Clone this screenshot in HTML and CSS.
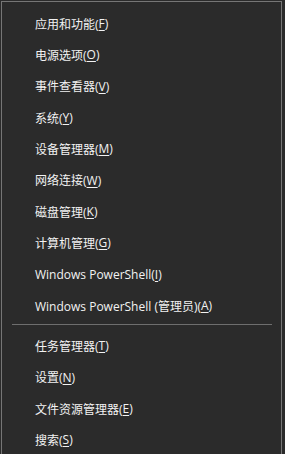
FILE: index.html
```html
<!DOCTYPE html>
<html lang="zh-CN">
<head>
<meta charset="utf-8">
<link rel="stylesheet" href="styles.css">
</head>
<body>
<div class="menu">
  <ul class="group">
    <li class="item">应用和功能(<u>F</u>)</li>
    <li class="item">电源选项(<u>O</u>)</li>
    <li class="item">事件查看器(<u>V</u>)</li>
    <li class="item">系统(<u>Y</u>)</li>
    <li class="item">设备管理器(<u>M</u>)</li>
    <li class="item">网络连接(<u>W</u>)</li>
    <li class="item">磁盘管理(<u>K</u>)</li>
    <li class="item">计算机管理(<u>G</u>)</li>
    <li class="item">Windows PowerShell(<u>I</u>)</li>
    <li class="item">Windows PowerShell (管理员)(<u>A</u>)</li>
  </ul>
  <div class="sep"></div>
  <ul class="group">
    <li class="item">任务管理器(<u>T</u>)</li>
    <li class="item">设置(<u>N</u>)</li>
    <li class="item">文件资源管理器(<u>E</u>)</li>
    <li class="item">搜索(<u>S</u>)</li>
  </ul>
</div>
</body>
</html>
```
FILE: styles.css
```css
html, body {
  margin: 0;
  padding: 0;
  background: #2b2b2b;
  height: 100%;
}
body {
  padding: 1px 3px 0 1px;
  box-sizing: border-box;
  overflow: hidden;
}
.menu {
  border: 1px solid #767676;
  border-bottom: none;
  background: #2b2b2b;
  height: 100%;
  box-sizing: border-box;
  padding-top: 6px;
  font-family: "Open Sans", "Noto Sans CJK SC", sans-serif;
  font-size: 12px;
  color: #f2f2f2;
}
.group {
  list-style: none;
  margin: 0;
  padding: 0;
}
.item {
  height: 31.33px;
  display: flex;
  align-items: center;
  padding-left: 33px;
  white-space: nowrap;
}
.item u {
  text-decoration: underline;
  text-underline-offset: 2px;
}
.sep {
  height: 1px;
  background: #6e6e6e;
  margin: 3px 9px 5px 10px;
}
```
